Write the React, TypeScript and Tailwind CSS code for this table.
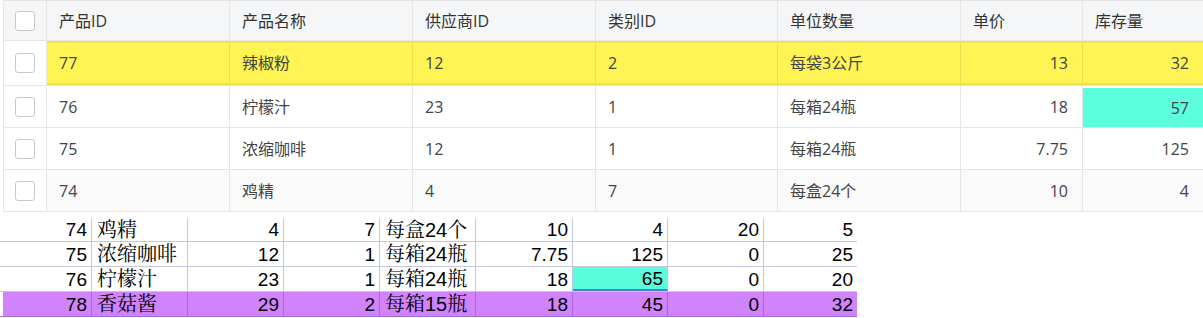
import React from 'react';

type TopRow = {
  id: string;
  name: string;
  supplier: string;
  category: string;
  unit: string;
  price: string;
  stock: string;
};

const topRows: TopRow[] = [
  { id: '77', name: '辣椒粉', supplier: '12', category: '2', unit: '每袋3公斤', price: '13', stock: '32' },
  { id: '76', name: '柠檬汁', supplier: '23', category: '1', unit: '每箱24瓶', price: '18', stock: '57' },
  { id: '75', name: '浓缩咖啡', supplier: '12', category: '1', unit: '每箱24瓶', price: '7.75', stock: '125' },
  { id: '74', name: '鸡精', supplier: '4', category: '7', unit: '每盒24个', price: '10', stock: '4' },
];

const sheetRows = [
  ['74', '鸡精', '4', '7', '每盒24个', '10', '4', '20', '5'],
  ['75', '浓缩咖啡', '12', '1', '每箱24瓶', '7.75', '125', '0', '25'],
  ['76', '柠檬汁', '23', '1', '每箱24瓶', '18', '65', '0', '20'],
  ['78', '香菇酱', '29', '2', '每箱15瓶', '18', '45', '0', '32'],
];

const gridCols = 'grid grid-cols-[43px_183px_183px_183px_182px_183px_122px_121px]';
const sheetCols = 'grid grid-cols-[92px_96px_96px_96px_96px_97px_95px_96px_93px]';

const Checkbox: React.FC = () => (
  <span className="block w-[20px] h-[20px] rounded-[3px] border border-[#c9c9c9] bg-white" />
);

const DataGrid: React.FC = () => {
  const headers = ['产品ID', '产品名称', '供应商ID', '类别ID', '单位数量', '单价', '库存量'];

  return (
    <div
      className="ml-[3px] w-[1200px] border-l border-t border-[#e6e6e6] text-[16px]"
      style={{ fontFamily: '"Open Sans", "Noto Sans CJK SC", sans-serif' }}
    >
      <div className={`${gridCols} h-[40px] bg-[#f5f6f8] text-[#333] border-b border-[#e6e6e6]`}>
        <div className="flex items-center justify-center border-r border-[#e6e6e6]">
          <Checkbox />
        </div>
        {headers.map((h) => (
          <div key={h} className="flex items-center px-3 border-r border-[#e6e6e6]">
            {h}
          </div>
        ))}
      </div>

      {topRows.map((r, i) => {
        const selected = i === 0;
        const rowBg = selected ? '' : i === 3 ? 'bg-[#fafafa]' : 'bg-white';
        const cells = [r.id, r.name, r.supplier, r.category, r.unit, r.price, r.stock];
        return (
          <div
            key={r.id}
            className={`${gridCols} ${selected ? 'h-[45px]' : 'h-[42px]'} text-[#444] border-b border-[#e6e6e6] ${rowBg}`}
          >
            <div className="flex items-center justify-center border-r border-[#e6e6e6] bg-white">
              <Checkbox />
            </div>
            {cells.map((c, j) => {
              const right = j >= 5;
              const cyan = i === 1 && j === 6;
              return (
                <div
                  key={j}
                  className={`flex items-center px-3 ${right ? 'justify-end pr-[14px]' : ''} ${
                    selected
                      ? 'bg-[#fff453] border-y-2 border-[#efe24a] border-r border-r-[#ece04c]'
                      : cyan
                      ? 'bg-[#5cfedd] mt-[2px] border-r border-[#e6e6e6]'
                      : 'border-r border-[#e6e6e6]'
                  }`}
                >
                  {c}
                </div>
              );
            })}
          </div>
        );
      })}
    </div>
  );
};

const Sheet: React.FC = () => (
  <div
    className="mt-[6px] w-[857px] text-black"
    style={{ fontFamily: '"Liberation Sans", "Noto Serif CJK SC", "Noto Sans CJK SC", serif' }}
  >
    {sheetRows.map((row, i) => {
      const purple = i === 3;
      return (
        <div
          key={i}
          className={`${sheetCols} ${i === 0 ? 'h-[24px]' : 'h-[25px]'} border-b ${
            purple ? 'border-[#a56cd6]' : 'border-[#c4c7de]'
          }`}
        >
          {row.map((c, j) => {
            const text = j === 1 || j === 4;
            const cyan = i === 2 && j === 6;
            const last = j === row.length - 1;
            let bg = '';
            if (purple) bg = j === 0 ? 'bg-[linear-gradient(to_right,white_3px,#d183fc_3px)]' : 'bg-[#d183fc]';
            if (cyan) bg = 'bg-[#5bfcdc] border-b-2 border-b-[#4a80d4]';
            return (
              <div
                key={j}
                className={`flex items-center leading-none ${
                  text ? 'justify-start pl-[5px] text-[20px]' : 'justify-end pr-[4px] text-[19px]'
                } ${last ? '' : purple ? 'border-r border-[#a56cd6]' : 'border-r border-[#c4c7de]'} ${bg}`}
              >
                {c}
              </div>
            );
          })}
        </div>
      );
    })}
  </div>
);

export default function App() {
  return (
    <div className="w-[1203px] h-[318px] bg-white overflow-hidden">
      <DataGrid />
      <Sheet />
    </div>
  );
}
